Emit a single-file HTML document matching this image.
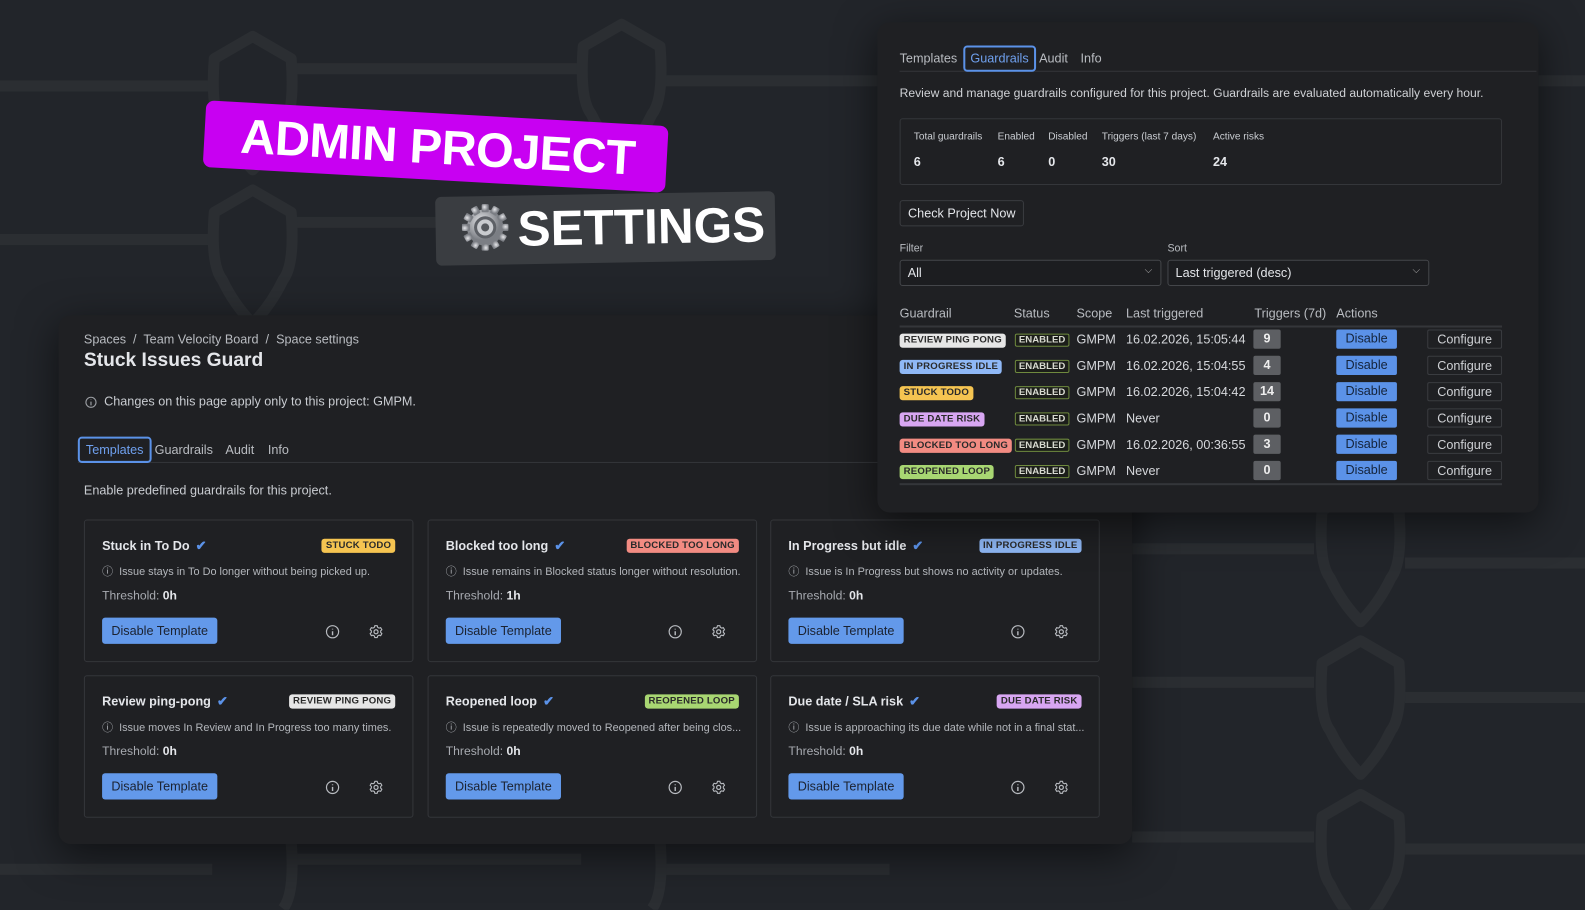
<!DOCTYPE html>
<html><head><meta charset="utf-8"><style>
*{box-sizing:border-box;margin:0;padding:0}
body{width:1585px;height:900px;overflow:hidden;background:#22252a;font-family:"Liberation Sans",sans-serif;color:#c9ccd1;position:relative}
#w{position:absolute;left:0;top:0;width:1568px;height:891px;transform:scale(1.0108);transform-origin:0 0}
.abs{position:absolute}
.panel{position:absolute;background:#1f2023;border-radius:12px;box-shadow:0 10px 40px rgba(0,0,0,.55)}
.card{position:absolute;width:326px;height:141px;border:1px solid #34363a;border-radius:3px;background:#1f2023}
.card .t{position:absolute;left:17px;top:17px;font-size:12.5px;font-weight:bold;color:#e4e6ea}
.card .t span{color:#5b92e8;margin-left:6px;font-size:13px}
.badge{position:absolute;font-size:9.5px;font-weight:bold;color:#2a2a2a;padding:1px 4px;border-radius:3px;letter-spacing:.2px;line-height:12px}
.card .badge{right:17px;top:18px}
.card .d{position:absolute;left:17px;top:42px;font-size:10.8px;color:#b3b6bb;white-space:nowrap}
.card .th{position:absolute;left:17px;top:67px;font-size:12px;color:#a7aab0}
.card .th b{color:#e4e6ea}
.btn{position:absolute;background:#6399ea;color:#1b2230;font-size:12.5px;border-radius:3px;text-align:center}
.card .btn{left:17px;top:96px;width:114px;height:26px;line-height:26px}
.ic{position:absolute;width:14px;height:14px}
.tabs{position:absolute;font-size:12.5px;color:#b9bcc1}
.tab{position:absolute;top:0}
.sel{border:2px solid #5b92e8;border-radius:4px;color:#6fa0ee}
.row{position:absolute;left:890px;width:596px;height:26px;font-size:12.5px;color:#d6d8dc}
.row>*{position:absolute}
.en{left:114px;top:7px;font-size:9.5px;font-weight:bold;border:1px solid #6f8a3e;color:#d8dad0;padding:0 3px;border-radius:2px;line-height:11px;background:#1c1e1a}
.cnt{left:350px;top:3px;height:19px;min-width:27px;background:#5d5f63;color:#eee;text-align:center;line-height:19px;border-radius:2px;font-weight:bold;padding:0 5px}
.dis{left:432px;top:3px;width:60px;height:19px;line-height:19px;background:#5b92e8;color:#14233a;text-align:center;border-radius:2px}
.cfg{left:522px;top:3px;width:74px;height:19px;line-height:19px;border:1px solid #3a3c40;color:#cfd1d5;text-align:center;border-radius:2px}
</style></head><body><div id="w">

<svg class="abs" style="left:0;top:0" width="1585" height="900">
<g stroke="#2b2e32" stroke-width="11" fill="none" stroke-linejoin="round">
<path d="M0 85H210 M290 68H575 M655 80H1585"/>
<path d="M0 237H210 M290 220H440"/>
<path d="M1120 543H1300 M1390 557H1585 M1120 675H1300 M1390 690H1585 M1120 828H1300 M1390 840H1585"/>
<path d="M0 860H210 M290 850H575 M655 860H880"/>
<path d="M250 36 L288 58 Q292 110 280 125 Q268 150 250 168 Q232 150 220 125 Q208 110 212 58 Z"/>
<path d="M615 24 L653 46 Q657 98 645 113 Q633 138 615 156 Q597 138 585 113 Q573 98 577 46 Z"/>
<path d="M250 188 L288 210 Q292 262 280 277 Q268 302 250 320 Q232 302 220 277 Q208 262 212 210 Z"/>
<path d="M1346 483 L1384 505 Q1388 557 1376 572 Q1364 597 1346 615 Q1328 597 1316 572 Q1304 557 1308 505 Z"/>
<path d="M1346 634 L1384 656 Q1388 708 1376 723 Q1364 748 1346 766 Q1328 748 1316 723 Q1304 708 1308 656 Z"/>
<path d="M1346 786 L1384 808 Q1388 860 1376 875 Q1364 900 1346 918 Q1328 900 1316 875 Q1304 860 1308 808 Z"/>
<path d="M250 810 L288 832 Q292 884 280 899"/>
<path d="M615 810 L653 832 Q657 884 645 899"/>
</g></svg>

<div class="panel" style="left:58px;top:312px;width:1062px;height:523px"></div>
<div class="abs" style="left:83px;top:329px;font-size:12.5px;color:#b9bcc1">Spaces &nbsp;/&nbsp; Team Velocity Board &nbsp;/&nbsp; Space settings</div>
<div class="abs" style="left:83px;top:346px;font-size:19px;font-weight:bold;color:#e4e6ea">Stuck Issues Guard</div>
<svg class="ic" style="left:83px;top:391px" viewBox="0 0 14 14"><circle cx="7" cy="7" r="5" fill="none" stroke="#9a9da2" stroke-width="1.1"/><path d="M7 6.3V10M7 4.2v.4" stroke="#9a9da2" stroke-width="1.2"/></svg>
<div class="abs" style="left:103px;top:390px;font-size:12.5px;color:#c9ccd1">Changes on this page apply only to this project: GMPM.</div>
<div class="tabs" style="left:77px;top:432px;width:1000px;height:26px;border-bottom:1px solid #34363a">
<div class="tab sel" style="left:0;top:0;padding:4px 6px">Templates</div>
<div class="tab" style="left:76px;top:6px">Guardrails</div>
<div class="tab" style="left:146px;top:6px">Audit</div>
<div class="tab" style="left:188px;top:6px">Info</div>
</div>
<div class="abs" style="left:83px;top:478px;font-size:12.5px;color:#c9ccd1">Enable predefined guardrails for this project.</div>

<div class="card" style="left:83px;top:514px"><div class="t">Stuck in To Do<span>✔</span></div><div class="badge" style="background:#f5c451">STUCK TODO</div><div class="d">ⓘ&nbsp; Issue stays in To Do longer without being picked up.</div><div class="th">Threshold: <b>0h</b></div><div class="btn">Disable Template</div></div>
<div class="card" style="left:423px;top:514px"><div class="t">Blocked too long<span>✔</span></div><div class="badge" style="background:#f28b82">BLOCKED TOO LONG</div><div class="d">ⓘ&nbsp; Issue remains in Blocked status longer without resolution.</div><div class="th">Threshold: <b>1h</b></div><div class="btn">Disable Template</div></div>
<div class="card" style="left:762px;top:514px"><div class="t">In Progress but idle<span>✔</span></div><div class="badge" style="background:#8fb8f6">IN PROGRESS IDLE</div><div class="d">ⓘ&nbsp; Issue is In Progress but shows no activity or updates.</div><div class="th">Threshold: <b>0h</b></div><div class="btn">Disable Template</div></div>
<div class="card" style="left:83px;top:668px"><div class="t">Review ping-pong<span>✔</span></div><div class="badge" style="background:#e6e6e6">REVIEW PING PONG</div><div class="d">ⓘ&nbsp; Issue moves In Review and In Progress too many times.</div><div class="th">Threshold: <b>0h</b></div><div class="btn">Disable Template</div></div>
<div class="card" style="left:423px;top:668px"><div class="t">Reopened loop<span>✔</span></div><div class="badge" style="background:#a8d672">REOPENED LOOP</div><div class="d">ⓘ&nbsp; Issue is repeatedly moved to Reopened after being clos...</div><div class="th">Threshold: <b>0h</b></div><div class="btn">Disable Template</div></div>
<div class="card" style="left:762px;top:668px"><div class="t">Due date / SLA risk<span>✔</span></div><div class="badge" style="background:#d8a6f2">DUE DATE RISK</div><div class="d">ⓘ&nbsp; Issue is approaching its due date while not in a final stat...</div><div class="th">Threshold: <b>0h</b></div><div class="btn">Disable Template</div></div>

<svg class="abs" style="left:0;top:0" width="1585" height="900">
<defs>
<g id="inf"><circle cx="0" cy="0" r="6" fill="none" stroke="#b8bbc0" stroke-width="1.2"/><path d="M0 -0.5V3.5M0 -3V-2.2" stroke="#b8bbc0" stroke-width="1.4"/></g>
<g id="gear"><circle r="2" fill="none" stroke="#b8bbc0" stroke-width="1.2"/><path d="M-1.2 -6h2.4l.4 1.6 1.4.8 1.6-.5 1.2 2.1-1.2 1.1v1.6l1.2 1.1-1.2 2.1-1.6-.5-1.4.8-.4 1.6h-2.4l-.4-1.6-1.4-.8-1.6.5-1.2-2.1 1.2-1.1v-1.6l-1.2-1.1 1.2-2.1 1.6.5 1.4-.8z" fill="none" stroke="#b8bbc0" stroke-width="1.1" stroke-linejoin="round"/></g>
</defs>
<use href="#inf" x="329" y="625"/><use href="#gear" x="372" y="625"/>
<use href="#inf" x="668" y="625"/><use href="#gear" x="711" y="625"/>
<use href="#inf" x="1007" y="625"/><use href="#gear" x="1050" y="625"/>
<use href="#inf" x="329" y="779"/><use href="#gear" x="372" y="779"/>
<use href="#inf" x="668" y="779"/><use href="#gear" x="711" y="779"/>
<use href="#inf" x="1007" y="779"/><use href="#gear" x="1050" y="779"/>
</svg>

<div class="panel" style="left:868px;top:22px;width:654px;height:485px"></div>
<div class="tabs" style="left:890px;top:45px;width:630px;height:26px;border-bottom:1px solid #34363a">
<div class="tab" style="left:0;top:6px">Templates</div>
<div class="tab sel" style="left:63px;top:0;padding:4px 5px">Guardrails</div>
<div class="tab" style="left:138px;top:6px">Audit</div>
<div class="tab" style="left:179px;top:6px">Info</div>
</div>
<div class="abs" style="left:890px;top:85px;font-size:12px;color:#cfd1d5">Review and manage guardrails configured for this project. Guardrails are evaluated automatically every hour.</div>
<div class="abs" style="left:890px;top:117px;width:596px;height:66px;border:1px solid #34363a;border-radius:3px;font-size:10px;color:#c9ccd1">
<div class="abs" style="left:13px;top:12px">Total guardrails</div><div class="abs" style="left:96px;top:12px">Enabled</div><div class="abs" style="left:146px;top:12px">Disabled</div><div class="abs" style="left:199px;top:12px">Triggers (last 7 days)</div><div class="abs" style="left:309px;top:12px">Active risks</div>
<div class="abs" style="left:13px;top:35px;font-size:12.5px;font-weight:bold;color:#e4e6ea">6</div><div class="abs" style="left:96px;top:35px;font-size:12.5px;font-weight:bold;color:#e4e6ea">6</div><div class="abs" style="left:146px;top:35px;font-size:12.5px;font-weight:bold;color:#e4e6ea">0</div><div class="abs" style="left:199px;top:35px;font-size:12.5px;font-weight:bold;color:#e4e6ea">30</div><div class="abs" style="left:309px;top:35px;font-size:12.5px;font-weight:bold;color:#e4e6ea">24</div>
</div>
<div class="abs" style="left:890px;top:198px;width:123px;height:26px;border:1px solid #3a3c40;border-radius:3px;font-size:12.5px;color:#e4e6ea;text-align:center;line-height:24px">Check Project Now</div>
<div class="abs" style="left:890px;top:240px;font-size:10.5px;color:#b9bcc1">Filter</div>
<div class="abs" style="left:1155px;top:240px;font-size:10.5px;color:#b9bcc1">Sort</div>
<div class="abs" style="left:890px;top:257px;width:259px;height:26px;border:1px solid #44464a;border-radius:3px;font-size:12.5px;color:#e4e6ea;padding:5px 7px;background:#1c1d20">All<span style="position:absolute;right:8px;top:4px;font-size:10px;color:#aaa">⌵</span></div>
<div class="abs" style="left:1155px;top:257px;width:259px;height:26px;border:1px solid #44464a;border-radius:3px;font-size:12.5px;color:#e4e6ea;padding:5px 7px;background:#1c1d20">Last triggered (desc)<span style="position:absolute;right:8px;top:4px;font-size:10px;color:#aaa">⌵</span></div>

<div class="row" style="top:302px;font-size:12.5px;color:#b9bcc1;border-bottom:2px solid #34363a;height:22px">
<div style="left:0;top:1px">Guardrail</div><div style="left:113px;top:1px">Status</div><div style="left:175px;top:1px">Scope</div><div style="left:224px;top:1px">Last triggered</div><div style="left:351px;top:1px">Triggers (7d)</div><div style="left:432px;top:1px">Actions</div></div>

<div class="row" style="top:323px"><div class="badge" style="left:0;top:7px;background:#e6e6e6">REVIEW PING PONG</div><div class="en">ENABLED</div><div style="left:175px;top:6px">GMPM</div><div style="left:224px;top:6px">16.02.2026, 15:05:44</div><div class="cnt">9</div><div class="dis">Disable</div><div class="cfg">Configure</div></div>
<div class="row" style="top:349px"><div class="badge" style="left:0;top:7px;background:#8fb8f6">IN PROGRESS IDLE</div><div class="en">ENABLED</div><div style="left:175px;top:6px">GMPM</div><div style="left:224px;top:6px">16.02.2026, 15:04:55</div><div class="cnt">4</div><div class="dis">Disable</div><div class="cfg">Configure</div></div>
<div class="row" style="top:375px"><div class="badge" style="left:0;top:7px;background:#f5c451">STUCK TODO</div><div class="en">ENABLED</div><div style="left:175px;top:6px">GMPM</div><div style="left:224px;top:6px">16.02.2026, 15:04:42</div><div class="cnt">14</div><div class="dis">Disable</div><div class="cfg">Configure</div></div>
<div class="row" style="top:401px"><div class="badge" style="left:0;top:7px;background:#d8a6f2">DUE DATE RISK</div><div class="en">ENABLED</div><div style="left:175px;top:6px">GMPM</div><div style="left:224px;top:6px">Never</div><div class="cnt">0</div><div class="dis">Disable</div><div class="cfg">Configure</div></div>
<div class="row" style="top:427px"><div class="badge" style="left:0;top:7px;background:#f28b82">BLOCKED TOO LONG</div><div class="en">ENABLED</div><div style="left:175px;top:6px">GMPM</div><div style="left:224px;top:6px">16.02.2026, 00:36:55</div><div class="cnt">3</div><div class="dis">Disable</div><div class="cfg">Configure</div></div>
<div class="row" style="top:453px;border-bottom:2px solid #34363a;height:27px"><div class="badge" style="left:0;top:7px;background:#a8d672">REOPENED LOOP</div><div class="en">ENABLED</div><div style="left:175px;top:6px">GMPM</div><div style="left:224px;top:6px">Never</div><div class="cnt">0</div><div class="dis">Disable</div><div class="cfg">Configure</div></div>

<div class="abs" style="left:202px;top:112px;width:458px;height:66px;background:#c800f2;border-radius:8px;transform:rotate(3.2deg);transform-origin:center"></div>
<div class="abs" style="left:238px;top:108px;font-size:48px;font-weight:bold;color:#fff;transform:rotate(3.2deg);transform-origin:left center;letter-spacing:-0.5px;white-space:nowrap">ADMIN PROJECT</div>
<div class="abs" style="left:431px;top:192px;width:336px;height:68px;background:#3a3d41;border-radius:6px;transform:rotate(-1deg)"></div>
<svg class="abs" style="left:455px;top:200px" width="50" height="50" viewBox="-25 -25 50 50">
<defs><radialGradient id="gg" cx="40%" cy="35%"><stop offset="0" stop-color="#e6e7ea"/><stop offset="1" stop-color="#7b7e84"/></radialGradient></defs>
<g fill="url(#gg)"><circle r="18"/>
<g id="tooth"><rect x="-3.5" y="-23" width="7" height="8" rx="1"/></g>
<use href="#tooth" transform="rotate(30)"/><use href="#tooth" transform="rotate(60)"/><use href="#tooth" transform="rotate(90)"/><use href="#tooth" transform="rotate(120)"/><use href="#tooth" transform="rotate(150)"/><use href="#tooth" transform="rotate(180)"/><use href="#tooth" transform="rotate(210)"/><use href="#tooth" transform="rotate(240)"/><use href="#tooth" transform="rotate(270)"/><use href="#tooth" transform="rotate(300)"/><use href="#tooth" transform="rotate(330)"/></g>
<circle r="11" fill="#5d6066"/><circle r="8" fill="#c9cbcf"/><circle r="4" fill="#55585d"/>
</svg>
<div class="abs" style="left:512px;top:197px;font-size:49px;font-weight:bold;color:#fff;white-space:nowrap;transform:rotate(-1deg)">SETTINGS</div>

</div></body></html>
